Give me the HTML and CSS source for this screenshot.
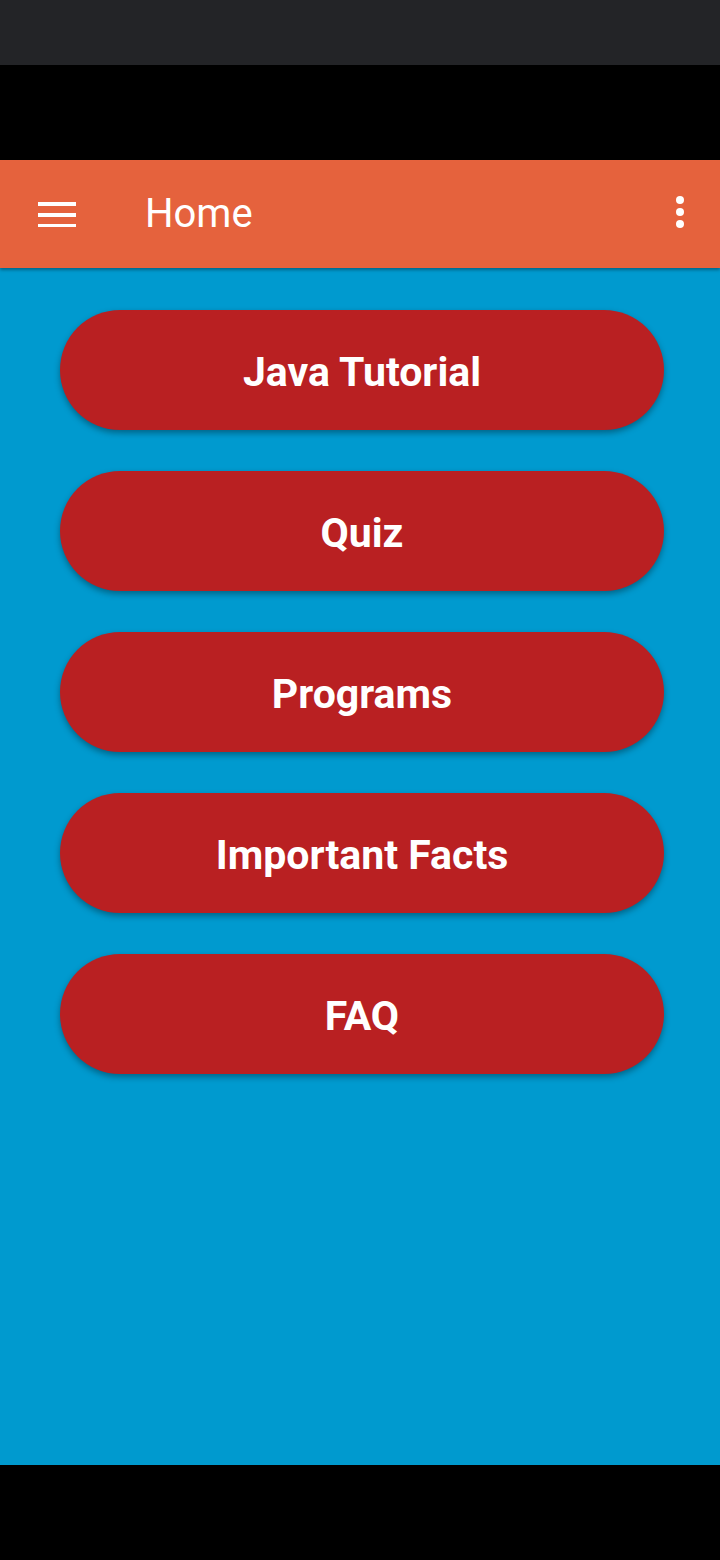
FILE: index.html
```html
<!DOCTYPE html>
<html>
<head>
<meta charset="utf-8">
<link rel="stylesheet" href="styles.css">
</head>
<body>
<div class="screen">
  <div class="statusbar"></div>
  <div class="blackband"></div>
  <header class="toolbar">
    <svg class="menu" width="38" height="28" viewBox="0 0 38 28"><rect x="0" y="3" width="38" height="4" fill="#fff"/><rect x="0" y="14" width="38" height="4" fill="#fff"/><rect x="0" y="25" width="38" height="4" fill="#fff"/></svg>
    <h1 class="title">Home</h1>
    <svg class="more" width="10" height="36" viewBox="0 0 10 36"><circle cx="5" cy="5" r="4" fill="#fff"/><circle cx="5" cy="17" r="4" fill="#fff"/><circle cx="5" cy="29" r="4" fill="#fff"/></svg>
  </header>
  <main class="content">
    <button class="btn">Java Tutorial</button>
    <button class="btn">Quiz</button>
    <button class="btn">Programs</button>
    <button class="btn">Important Facts</button>
    <button class="btn">FAQ</button>
  </main>
  <div class="navbar"></div>
</div>
</body>
</html>
```
FILE: styles.css
```css
* { box-sizing: border-box; }
html, body { margin: 0; padding: 0; }
body { width: 720px; height: 1560px; font-family: Roboto, "Liberation Sans", sans-serif; background: #000; }
.screen { display: flex; flex-direction: column; height: 1560px; }
.statusbar { height: 65px; background: #232427; }
.blackband { height: 95px; background: #000; }
.toolbar { height: 108px; background: #E5623D; display: flex; align-items: center; padding: 0 35px 0 38px; box-shadow: 0 2px 3px rgba(0,0,0,0.35); position: relative; z-index: 1; }
.menu { display: block; margin-top: -2px; }
.title { margin: 0 0 0 69px; font-weight: 400; font-size: 40px; color: #fff; flex: 1; line-height: 1; margin-top: -1px; }
.more { display: block; margin-top: -3px; }
.content { flex: 1; background: #009ACF; display: flex; flex-direction: column; align-items: center; gap: 41px; padding-top: 42px; padding-left: 4px; }
.btn { width: 604px; height: 120px; border: none; border-radius: 60px; background: #B92022; color: #fff; font-family: Roboto, "Liberation Sans", sans-serif; font-weight: 700; font-size: 41px; box-shadow: 0 3px 6px rgba(0,0,0,0.35); padding: 4px 0 0; }
.navbar { height: 95px; background: #000; }
```
